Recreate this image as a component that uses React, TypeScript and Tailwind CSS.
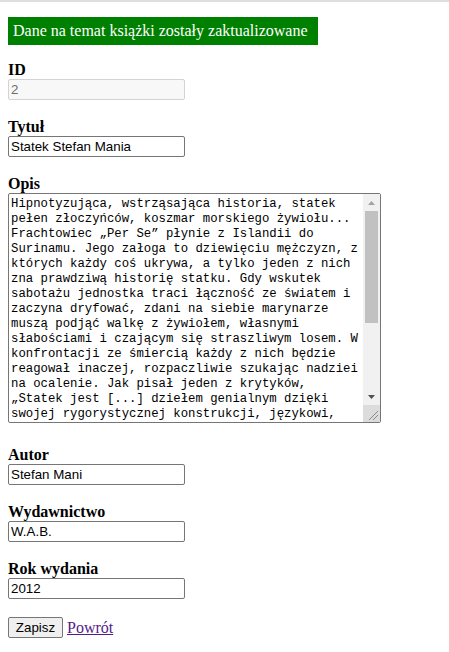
import * as React from "react";

const opis =
  "Hipnotyzująca, wstrząsająca historia, statek pełen złoczyńców, koszmar morskiego żywiołu... Frachtowiec „Per Se” płynie z Islandii do Surinamu. Jego załoga to dziewięciu mężczyzn, z których każdy coś ukrywa, a tylko jeden z nich zna prawdziwą historię statku. Gdy wskutek sabotażu jednostka traci łączność ze światem i zaczyna dryfować, zdani na siebie marynarze muszą podjąć walkę z żywiołem, własnymi słabościami i czającym się straszliwym losem. W konfrontacji ze śmiercią każdy z nich będzie reagował inaczej, rozpaczliwie szukając nadziei na ocalenie. Jak pisał jeden z krytyków, „Statek jest [...] dziełem genialnym dzięki swojej rygorystycznej konstrukcji, językowi, atmosferze i bohaterom”.";

const inputClass =
  "block w-[177px] h-[21px] border border-[#767676] rounded-[2px] px-[2px] py-[1px] text-[13.33px] leading-[17px] font-['Liberation_Sans',Arial,sans-serif] text-black bg-white outline-none";

function Label(props: { htmlFor: string; children: React.ReactNode }) {
  return (
    <label
      htmlFor={props.htmlFor}
      className="block h-[18px] leading-[18px] text-[16px] font-bold text-black"
    >
      {props.children}
    </label>
  );
}

function Field(props: {
  id: string;
  label: string;
  value: string;
  className?: string;
}) {
  const [value, setValue] = React.useState(props.value);
  return (
    <div className={props.className}>
      <Label htmlFor={props.id}>{props.label}</Label>
      <input
        id={props.id}
        type="text"
        className={inputClass}
        value={value}
        onChange={(e) => setValue(e.target.value)}
      />
    </div>
  );
}

function FakeScrollbar() {
  return (
    <div className="flex w-[17px] flex-col bg-[#f1f1f1]">
      <div className="flex h-[17px] items-center justify-center">
        <svg width="7" height="4" viewBox="0 0 7 4">
          <polygon points="0,4 7,4 3.5,0" fill="#a3a3a3" />
        </svg>
      </div>
      <div className="flex-1 px-[2px]">
        <div className="h-[112px] bg-[#c1c1c1]" />
      </div>
      <div className="flex h-[17px] items-center justify-center">
        <svg width="7" height="4" viewBox="0 0 7 4">
          <polygon points="0,0 7,0 3.5,4" fill="#505050" />
        </svg>
      </div>
      <div className="flex h-[17px] items-end justify-end bg-[#dcdcdc]">
        <svg width="17" height="17" viewBox="0 0 17 17">
          <line x1="6" y1="15" x2="15" y2="6" stroke="#8a8a8a" strokeWidth="1" />
          <line x1="10" y1="15" x2="15" y2="10" stroke="#8a8a8a" strokeWidth="1" />
        </svg>
      </div>
    </div>
  );
}

export default function App() {
  const [text, setText] = React.useState(opis);

  return (
    <div className="min-h-screen bg-white font-['Liberation_Serif','Times_New_Roman',serif] text-black">
      <div className="h-[2px] bg-[#dedede]" />
      <div className="px-2 pt-[15px] pb-4">
        <div className="w-[310px] bg-[#008000] p-[5px] text-[16px] leading-[18px] text-white">
          Dane na temat książki zostały zaktualizowane
        </div>

        <form onSubmit={(e) => e.preventDefault()}>
          <div className="mt-4">
            <Label htmlFor="id">ID</Label>
            <input
              id="id"
              type="text"
              disabled
              value="2"
              className="block w-[177px] h-[21px] border border-[#d3d3d3] rounded-[2px] px-[2px] py-[1px] text-[13.33px] leading-[17px] font-['Liberation_Sans',Arial,sans-serif] text-[#6d6d6d] bg-[#f8f8f8]"
            />
          </div>

          <Field id="tytul" label="Tytuł" value="Statek Stefan Mania" className="mt-[18px]" />

          <div className="mt-[18px]">
            <Label htmlFor="opis">Opis</Label>
            <div className="flex h-[230px] w-[373px] border border-[#767676] rounded-[2px] bg-white">
              <textarea
                id="opis"
                value={text}
                onChange={(e) => setText(e.target.value)}
                className="flex-1 resize-none overflow-hidden px-[2px] pt-[3px] pb-[1px] text-[12.3px] leading-[15px] font-['Liberation_Mono','Courier_New',monospace] text-black outline-none"
              />
              <FakeScrollbar />
            </div>
          </div>

          <Field id="autor" label="Autor" value="Stefan Mani" className="mt-[23px]" />
          <Field id="wydawnictwo" label="Wydawnictwo" value="W.A.B." className="mt-[18px]" />
          <Field id="rok" label="Rok wydania" value="2012" className="mt-[18px]" />

          <div className="mt-[18px] flex items-center gap-[4px]">
            <button
              type="submit"
              className="h-[21px] w-[55px] border border-[#767676] rounded-[2px] bg-[#efefef] text-[13.33px] leading-[17px] font-['Liberation_Sans',Arial,sans-serif] text-black"
            >
              Zapisz
            </button>
            <a href="#" className="text-[16px] leading-[18px] text-[#551a8b] underline">
              Powrót
            </a>
          </div>
        </form>
      </div>
    </div>
  );
}
